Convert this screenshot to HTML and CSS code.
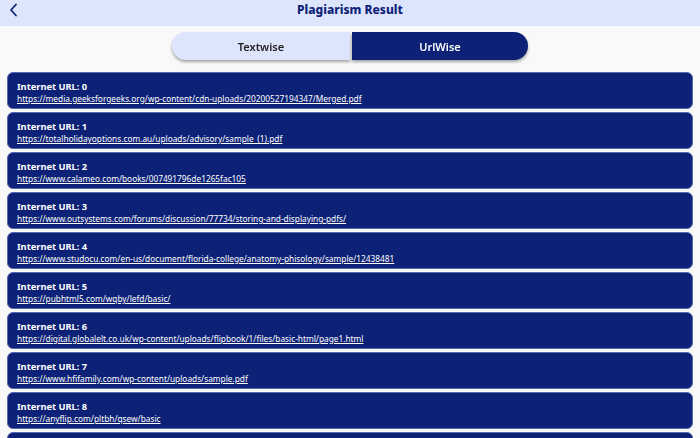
FILE: index.html
```html
<!DOCTYPE html>
<html>
<head>
<meta charset="utf-8">
<link rel="stylesheet" href="styles.css">
</head>
<body>
<header class="topbar">
  <span class="back"><svg width="10" height="14" viewBox="0 0 10 14"><path d="M7 1.5 L2 7 L7 12.5" fill="none" stroke="#0d2277" stroke-width="1.8" stroke-linecap="round" stroke-linejoin="round"/></svg></span>
  <h1 class="title">Plagiarism Result</h1>
</header>
<div class="toggle-wrap">
  <div class="toggle">
    <div class="seg seg-left">Textwise</div>
    <div class="seg seg-right active">UrlWise</div>
  </div>
</div>
<main class="list">
  <div class="card"><div class="label">Internet URL: 0</div><a class="link">https://media.geeksforgeeks.org/wp-content/cdn-uploads/20200527194347/Merged.pdf</a></div>
  <div class="card"><div class="label">Internet URL: 1</div><a class="link">https://totalholidayoptions.com.au/uploads/advisory/sample_(1).pdf</a></div>
  <div class="card"><div class="label">Internet URL: 2</div><a class="link">https://www.calameo.com/books/007491796de1265fac105</a></div>
  <div class="card"><div class="label">Internet URL: 3</div><a class="link">https://www.outsystems.com/forums/discussion/77734/storing-and-displaying-pdfs/</a></div>
  <div class="card"><div class="label">Internet URL: 4</div><a class="link">https://www.studocu.com/en-us/document/florida-college/anatomy-phisology/sample/12438481</a></div>
  <div class="card"><div class="label">Internet URL: 5</div><a class="link">https://pubhtml5.com/wqby/lefd/basic/</a></div>
  <div class="card"><div class="label">Internet URL: 6</div><a class="link">https://digital.globalelt.co.uk/wp-content/uploads/flipbook/1/files/basic-html/page1.html</a></div>
  <div class="card"><div class="label">Internet URL: 7</div><a class="link">https://www.hfifamily.com/wp-content/uploads/sample.pdf</a></div>
  <div class="card"><div class="label">Internet URL: 8</div><a class="link">https://anyflip.com/pltbh/qsew/basic</a></div>
  <div class="card"></div>
</main>
</body>
</html>
```
FILE: styles.css
```css
* { box-sizing: border-box; }
html, body { margin: 0; padding: 0; }
body {
  width: 700px;
  height: 438px;
  overflow: hidden;
  background: #f9f9f9;
  font-family: "Noto Sans", "Open Sans", sans-serif;
}
.topbar {
  height: 26px;
  background: #dde5fc;
  position: relative;
  display: flex;
  justify-content: center;
  padding-top: 2px;
}
.back {
  position: absolute;
  left: 9px;
  top: 3px;
  display: flex;
}
.title {
  margin: 0;
  font-size: 12px;
  line-height: 16px;
  font-weight: 800;
  color: #0d2277;
}
.toggle-wrap {
  display: flex;
  justify-content: center;
  padding-top: 6px;
  height: 46px;
}
.toggle {
  display: flex;
  gap: 2px;
  height: 28px;
  filter: drop-shadow(0 2px 1.5px rgba(0,0,0,0.35));
}
.seg {
  width: 178px;
  display: flex;
  align-items: center;
  justify-content: center;
  font-size: 11px;
  font-weight: 600;
}
.seg-left {
  background: #dde5fc;
  color: #222;
  border-radius: 14px 0 0 14px;
}
.seg-right {
  width: 176px;
  background: #0d2277;
  color: #fff;
  border-radius: 0 14px 14px 0;
}
.list {
  display: flex;
  flex-direction: column;
  gap: 3px;
  padding: 0 7px 0 7px;
}
.card {
  background: #0d2277;
  border-radius: 6px;
  height: 37px;
  flex-shrink: 0;
  padding: 7px 9px 0;
  color: #fff;
  border: 1px solid #5a6ab0;
}
.label {
  font-size: 9.3px;
  font-weight: 700;
  line-height: 13px;
}
.link {
  display: block;
  font-size: 8.3px;
  line-height: 12px;
  color: #fff;
  text-decoration: underline;
}
```
